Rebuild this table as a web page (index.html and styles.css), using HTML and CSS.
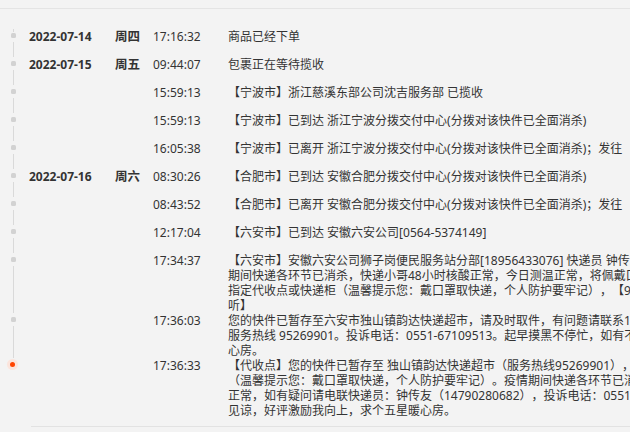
FILE: index.html
```html
<!DOCTYPE html>
<html lang="zh-CN">
<head>
<meta charset="utf-8">
<title>物流跟踪</title>
<link rel="stylesheet" href="styles.css">
</head>
<body>
<div class="page">
  <div class="track">
    <div class="row">
      <div class="axis"><span class="dot"></span></div>
      <div class="date">2022-07-14</div>
      <div class="week">周四</div>
      <div class="time">17:16:32</div>
      <div class="text">商品已经下单</div>
    </div>
    <div class="row">
      <div class="axis"><span class="dot"></span></div>
      <div class="date">2022-07-15</div>
      <div class="week">周五</div>
      <div class="time">09:44:07</div>
      <div class="text">包裹正在等待揽收</div>
    </div>
    <div class="row">
      <div class="axis"><span class="dot"></span></div>
      <div class="date"></div>
      <div class="week"></div>
      <div class="time">15:59:13</div>
      <div class="text">【宁波市】浙江慈溪东部公司沈吉服务部 已揽收</div>
    </div>
    <div class="row">
      <div class="axis"><span class="dot"></span></div>
      <div class="date"></div>
      <div class="week"></div>
      <div class="time">15:59:13</div>
      <div class="text">【宁波市】已到达 浙江宁波分拨交付中心(分拨对该快件已全面消杀)</div>
    </div>
    <div class="row">
      <div class="axis"><span class="dot"></span></div>
      <div class="date"></div>
      <div class="week"></div>
      <div class="time">16:05:38</div>
      <div class="text">【宁波市】已离开 浙江宁波分拨交付中心(分拨对该快件已全面消杀)；发往&nbsp;&nbsp;&nbsp;安徽合肥分拨交付中心</div>
    </div>
    <div class="row">
      <div class="axis"><span class="dot"></span></div>
      <div class="date">2022-07-16</div>
      <div class="week">周六</div>
      <div class="time">08:30:26</div>
      <div class="text">【合肥市】已到达 安徽合肥分拨交付中心(分拨对该快件已全面消杀)</div>
    </div>
    <div class="row">
      <div class="axis"><span class="dot"></span></div>
      <div class="date"></div>
      <div class="week"></div>
      <div class="time">08:43:52</div>
      <div class="text">【合肥市】已离开 安徽合肥分拨交付中心(分拨对该快件已全面消杀)；发往&nbsp;&nbsp;&nbsp;安徽六安公司</div>
    </div>
    <div class="row">
      <div class="axis"><span class="dot"></span></div>
      <div class="date"></div>
      <div class="week"></div>
      <div class="time">12:17:04</div>
      <div class="text">【六安市】已到达 安徽六安公司[0564-5374149]</div>
    </div>
    <div class="row">
      <div class="axis"><span class="dot"></span></div>
      <div class="date"></div>
      <div class="week"></div>
      <div class="time">17:34:37</div>
      <div class="text">【六安市】安徽六安公司狮子岗便民服务站分部[18956433076] 快递员 钟传友 正在为您派件，疫情<br>期间快递各环节已消杀，快递小哥48小时核酸正常，今日测温正常，将佩戴口罩为您派送，可联系快递员放置<br>指定代收点或快递柜（温馨提示您：戴口罩取快递，个人防护要牢记），【95720为韵达快递员外呼专属号码，请放心接<br>听】</div>
    </div>
    <div class="row">
      <div class="axis"><span class="dot"></span></div>
      <div class="date"></div>
      <div class="week"></div>
      <div class="time">17:36:03</div>
      <div class="text">您的快件已暂存至六安市独山镇韵达快递超市，请及时取件，有问题请联系14790280682，<br>服务热线 95269901。投诉电话：0551-67109513。起早摸黑不停忙，如有不周请见谅，好评激励我向上，求个五星暖<br>心房。</div>
    </div>
    <div class="row current">
      <div class="axis"><span class="dot"></span></div>
      <div class="date"></div>
      <div class="week"></div>
      <div class="time">17:36:33</div>
      <div class="text">【代收点】您的快件已暂存至 独山镇韵达快递超市（服务热线95269901），请及时取件<br>（温馨提示您：戴口罩取快递，个人防护要牢记）。疫情期间快递各环节已消杀，快递小哥48小时核酸<br>正常，如有疑问请电联快递员：钟传友（14790280682），投诉电话：0551-67109513。如有不周请多多<br>见谅，好评激励我向上，求个五星暖心房。</div>
    </div>
  </div>
  <div class="track-end"></div>
</div>
</body>
</html>
```

FILE: styles.css
```css
html, body {
  margin: 0;
  padding: 0;
  background: #f3f3f3;
  overflow: hidden;
}

body {
  font-family: "Noto Sans", "Noto Sans CJK SC", sans-serif;
  font-size: 12px;
  color: #333;
  text-spacing-trim: space-all;
}

.page {
  margin-top: 8px;
  border-top: 1px solid #e4e4e4;
  padding-top: 20px;
  overflow: hidden;
}

.row {
  display: grid;
  grid-template-columns: 29px 86px 38px 75px max-content;
  min-height: 28px;
  line-height: 15px;
}

.axis {
  position: relative;
}

.axis::after {
  content: "";
  position: absolute;
  left: 13px;
  top: 13px;
  bottom: 0;
  width: 1px;
  background: #d9d9d9;
}

.row:first-child .axis::before {
  content: "";
  position: absolute;
  left: 13px;
  top: 0;
  height: 3px;
  width: 1px;
  background: #d9d9d9;
}

.row.current .axis::after {
  display: none;
}

.dot {
  display: block;
  width: 5px;
  height: 5px;
  margin: 4px 0 0 11px;
  border-radius: 1.5px;
  background: #d2d2d2;
}

.row.current .dot {
  margin-left: 10px;
  border-radius: 50%;
  background: #ff4400;
  box-shadow: 0 0 0 3px #fbe4dc;
}

.date {
  font-weight: bold;
}

.week {
  font-weight: bold;
  font-size: 12.5px;
}

.text {
  white-space: nowrap;
}

.track-end {
  margin: 8px 0 0 31px;
  border-top: 1px solid #e2e2e2;
  height: 10px;
}
```
